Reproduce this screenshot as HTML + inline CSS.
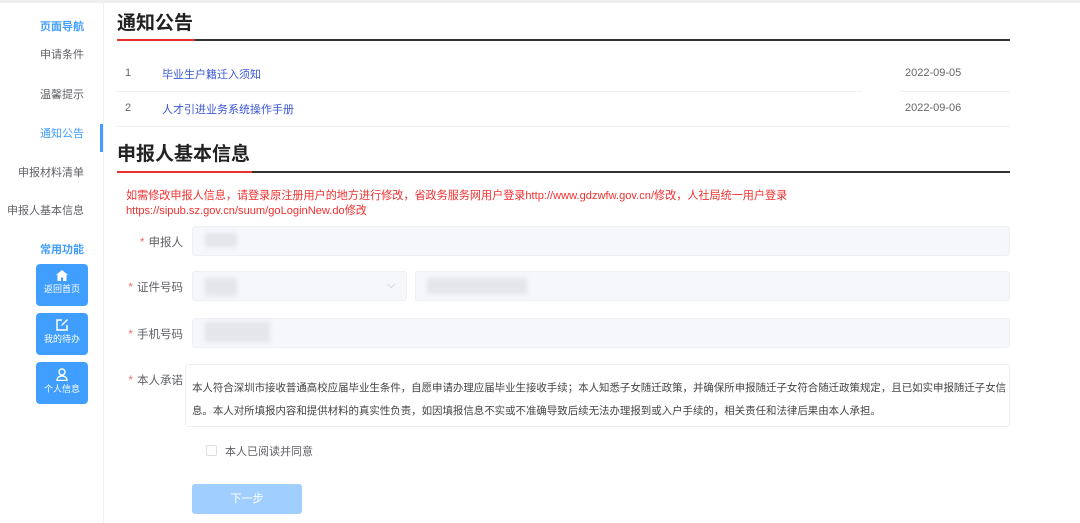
<!DOCTYPE html>
<html><head><meta charset="utf-8"><style>
*{margin:0;padding:0;box-sizing:border-box}
body{width:1080px;height:523px;background:#fff;position:relative;overflow:hidden;font-family:"Liberation Sans","Noto Sans CJK SC",sans-serif;color:#606266;font-size:12px}
.a{position:absolute;white-space:nowrap}
.nav{right:996px;font-size:11px;color:#606266}
.blue{color:#409eff}
.btn{position:absolute;left:36px;width:52px;height:42px;background:#409eff;border-radius:4px;color:#fff;font-size:9px;text-align:center}
.btn svg{display:block;margin:6px auto 1px}
.h{font-size:19px;font-weight:bold;color:#222}
.line{position:absolute;height:2px;background:#333}
.red{position:absolute;height:2px;background:#e8302f}
.inp{position:absolute;background:#f5f7fa;border:1px solid #eef0f4;border-radius:3px}
.lab{right:897px;font-size:11.5px;color:#606266}
.lab b{color:#f56c6c;font-weight:normal;margin-right:4px}
.blur{position:absolute;background:#e4e6eb;filter:blur(2px)}
</style></head><body>
<div class="a" style="left:0;top:0;width:1080px;height:3px;background:#eee"></div>
<div class="a" style="left:103px;top:3px;width:1px;height:520px;background:#f0f0f0"></div>

<div class="a nav blue" style="top:18px;font-weight:bold">页面导航</div>
<div class="a nav" style="top:46px">申请条件</div>
<div class="a nav" style="top:86px">温馨提示</div>
<div class="a nav blue" style="top:125px">通知公告</div>
<div class="a" style="left:100px;top:124px;width:3px;height:28px;background:#409eff"></div>
<div class="a nav" style="top:164px">申报材料清单</div>
<div class="a nav" style="top:202px">申报人基本信息</div>
<div class="a nav blue" style="top:241px;font-weight:bold">常用功能</div>
<div class="btn" style="top:264px"><svg width="12" height="11" viewBox="0 0 12 11"><path d="M6 0L0 5h1.5v6h3.5V7.5h2V11h3.5V5H12z" fill="#fff"/></svg>返回首页</div>
<div class="btn" style="top:313px"><svg width="12" height="12" viewBox="0 0 12 12"><path d="M6 1H1v10h10V6" stroke="#fff" stroke-width="1.5" fill="none"/><path d="M5 7l1-2 5-5 1 1-5 5z" fill="#fff"/></svg>我的待办</div>
<div class="btn" style="top:362px"><svg width="12" height="13" viewBox="0 0 12 13"><circle cx="6" cy="4" r="3" stroke="#fff" stroke-width="1.4" fill="none"/><path d="M1 12.5c0-3 2.2-4.5 5-4.5s5 1.5 5 4.5z" stroke="#fff" stroke-width="1.4" fill="none"/></svg>个人信息</div>

<div class="a h" style="left:117px;top:8px">通知公告</div>
<div class="line" style="left:117px;top:39px;width:893px"></div>
<div class="red" style="left:117px;top:39px;width:78px"></div>
<div class="a" style="left:125px;top:67px;color:#666;font-size:11px">1</div>
<div class="a" style="left:162px;top:66px;color:#3b55d6;font-size:11px">毕业生户籍迁入须知</div>
<div class="a" style="left:905px;top:67px;color:#666;font-size:11px">2022-09-05</div>
<div class="a" style="left:117px;top:91px;width:745px;height:1px;background:#f0f0f0"></div>
<div class="a" style="left:900px;top:91px;width:110px;height:1px;background:#f0f0f0"></div>
<div class="a" style="left:125px;top:102px;color:#666;font-size:11px">2</div>
<div class="a" style="left:162px;top:101px;color:#3b55d6;font-size:11px">人才引进业务系统操作手册</div>
<div class="a" style="left:905px;top:102px;color:#666;font-size:11px">2022-09-06</div>
<div class="a" style="left:117px;top:126px;width:893px;height:1px;background:#f0f0f0"></div>

<div class="a h" style="left:117px;top:139px">申报人基本信息</div>
<div class="line" style="left:117px;top:171px;width:893px"></div>
<div class="red" style="left:117px;top:171px;width:135px"></div>
<div class="a" style="left:126px;top:189px;color:#f0302f;line-height:15px;font-size:11.1px">如需修改申报人信息，请登录原注册用户的地方进行修改，省政务服务网用户登录http://www.gdzwfw.gov.cn/修改，人社局统一用户登录<br>https://sipub.sz.gov.cn/suum/goLoginNew.do修改</div>

<div class="a lab" style="top:234px"><b>*</b>申报人</div>
<div class="inp" style="left:192px;top:226px;width:818px;height:30px"></div>
<div class="blur" style="left:205px;top:233px;width:32px;height:14px"></div>

<div class="a lab" style="top:279px"><b>*</b>证件号码</div>
<div class="inp" style="left:192px;top:271px;width:215px;height:30px"></div>
<div class="blur" style="left:205px;top:278px;width:32px;height:18px"></div>
<div class="a" style="left:387px;top:279px;color:#bbb;font-size:11px">⌵</div>
<div class="inp" style="left:415px;top:271px;width:595px;height:30px"></div>
<div class="blur" style="left:427px;top:278px;width:100px;height:16px"></div>

<div class="a lab" style="top:326px"><b>*</b>手机号码</div>
<div class="inp" style="left:192px;top:318px;width:818px;height:30px"></div>
<div class="blur" style="left:205px;top:322px;width:65px;height:20px"></div>

<div class="a lab" style="top:372px"><b>*</b>本人承诺</div>
<div class="a" style="left:185px;top:364px;width:825px;height:63px;border:1px solid #ebeef5;border-radius:3px"></div>
<div class="a" style="left:192px;top:377px;line-height:23px;color:#444;font-size:10.45px">本人符合深圳市接收普通高校应届毕业生条件，自愿申请办理应届毕业生接收手续；本人知悉子女随迁政策，并确保所申报随迁子女符合随迁政策规定，且已如实申报随迁子女信<br>息。本人对所填报内容和提供材料的真实性负责，如因填报信息不实或不准确导致后续无法办理报到或入户手续的，相关责任和法律后果由本人承担。</div>

<div class="a" style="left:206px;top:445px;width:11px;height:11px;border:1px solid #dcdfe6;border-radius:2px"></div>
<div class="a" style="left:225px;top:443px;color:#606266;font-size:11px">本人已阅读并同意</div>
<div class="a" style="left:192px;top:484px;width:110px;height:30px;background:#a0cfff;border-radius:3px;color:#fff;text-align:center;line-height:30px;font-size:11px">下一步</div>
</body></html>
